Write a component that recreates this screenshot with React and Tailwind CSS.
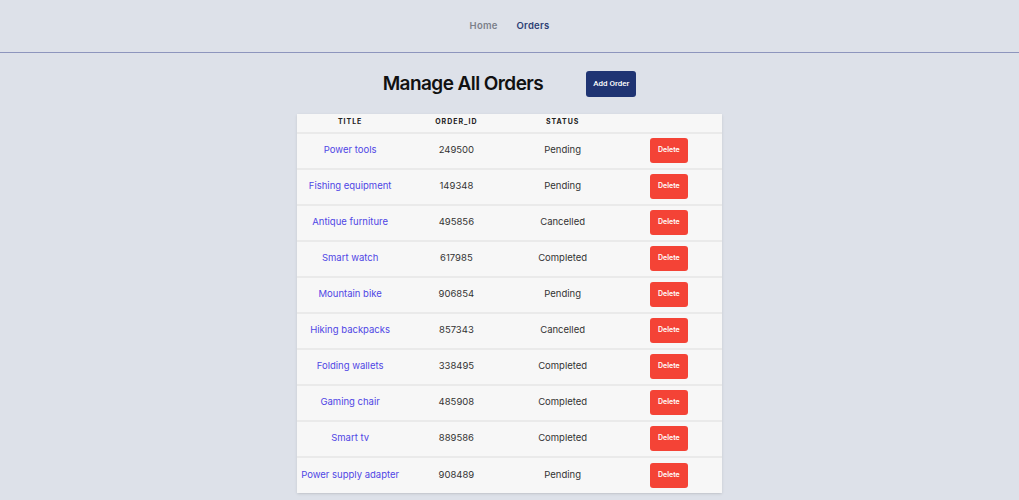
const orders = [
  { title: 'Power tools', id: '249500', status: 'Pending' },
  { title: 'Fishing equipment', id: '149348', status: 'Pending' },
  { title: 'Antique furniture', id: '495856', status: 'Cancelled' },
  { title: 'Smart watch', id: '617985', status: 'Completed' },
  { title: 'Mountain bike', id: '906854', status: 'Pending' },
  { title: 'Hiking backpacks', id: '857343', status: 'Cancelled' },
  { title: 'Folding wallets', id: '338495', status: 'Completed' },
  { title: 'Gaming chair', id: '485908', status: 'Completed' },
  { title: 'Smart tv', id: '889586', status: 'Completed' },
  { title: 'Power supply adapter', id: '908489', status: 'Pending' },
];

export default function App() {
  return (
    <div className="min-h-screen bg-[#dde1e9] font-['Inter',sans-serif] text-[#333]">
      <nav className="h-[53px] flex items-center justify-center gap-[19px] border-b border-[#8d95bd] text-[9.5px] font-semibold tracking-wide">
        <a className="text-[#7b7f8a]">Home</a>
        <a className="text-[#2c3e74]">Orders</a>
      </nav>

      <div className="flex items-center justify-center gap-[43px] pt-[17px] pb-[15px]">
        <h1 className="text-[19px] font-semibold text-[#111] tracking-[-0.03em]">Manage All Orders</h1>
        <button className="h-[26px] px-[7px] rounded-[3px] bg-[#1f3473] text-white text-[8px] font-['Roboto',sans-serif] font-medium">
          Add Order
        </button>
      </div>

      <div className="flex justify-center">
        <table className="w-[425px] bg-[#f7f7f7] shadow-sm text-[9.5px] table-fixed">
          <thead>
            <tr className="h-[19px] border-b-2 border-[#eaeaea]">
              <th className="text-[7px] font-bold tracking-[0.14em] text-[#222]">TITLE</th>
              <th className="text-[7px] font-bold tracking-[0.14em] text-[#222]">ORDER_ID</th>
              <th className="text-[7px] font-bold tracking-[0.14em] text-[#222]">STATUS</th>
              <th></th>
            </tr>
          </thead>
          <tbody>
            {orders.map((o) => (
              <tr key={o.id} className="h-[36px] border-b-2 border-[#eaeaea] last:border-b-0">
                <td className="text-center text-[#4f46e5]">{o.title}</td>
                <td className="text-center">{o.id}</td>
                <td className="text-center">{o.status}</td>
                <td className="text-center">
                  <button className="w-[38px] h-[25px] rounded-[3px] bg-[#f44336] text-white text-[7px] font-semibold">
                    Delete
                  </button>
                </td>
              </tr>
            ))}
          </tbody>
        </table>
      </div>
    </div>
  );
}
